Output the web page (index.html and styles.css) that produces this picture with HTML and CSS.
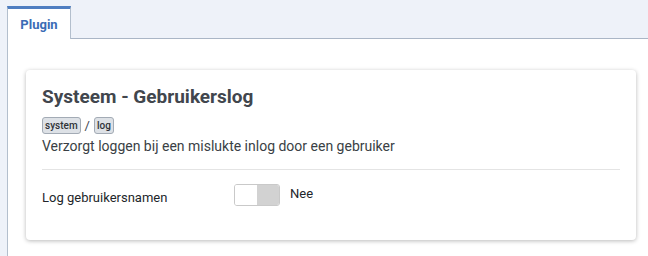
FILE: index.html
```html
<!DOCTYPE html>
<html lang="nl">
<head>
    <meta charset="UTF-8">
    <title>Plugin: Systeem - Gebruikerslog</title>
    <link rel="stylesheet" href="styles.css">
</head>
<body>
    <div class="tabset">
        <div class="tab-list">
            <button class="tab active">Plugin</button>
        </div>
        <div class="tab-panel">
            <div class="card">
                <h2 class="card-title">Systeem - Gebruikerslog</h2>
                <div class="tags">
                    <span class="badge">system</span>
                    <span class="sep">/</span>
                    <span class="badge">log</span>
                </div>
                <p class="desc">Verzorgt loggen bij een mislukte inlog door een gebruiker</p>
                <hr>
                <div class="field">
                    <label class="field-label">Log gebruikersnamen</label>
                    <div class="switch">
                        <span class="switch-on"></span>
                        <span class="switch-off"></span>
                    </div>
                    <span class="switch-text">Nee</span>
                </div>
            </div>
        </div>
    </div>
</body>
</html>
```

FILE: styles.css
```css
html, body {
    height: 256px;
    overflow: hidden;
}

body {
    margin: 0;
    font-family: Roboto, "Liberation Sans", sans-serif;
    background-color: #eef2f9;
    color: #22262a;
}

.tabset {
    margin-left: 7px;
}

.tab-list {
    display: flex;
    height: 39px;
    border-bottom: 1px solid #aab6c6;
    box-sizing: border-box;
}

.tab {
    margin-top: 6px;
    margin-bottom: -1px;
    width: 64px;
    padding: 0;
    border: 1px solid #b3bfcd;
    border-top: 3px solid #4f7ec1;
    border-bottom: none;
    background-color: #fff;
    color: #3b6cb5;
    font-family: inherit;
    font-size: 13px;
    font-weight: bold;
}

.tab-panel {
    background-color: #fff;
    border-left: 1px solid #b3bfcd;
    padding: 31px 12px 20px 18px;
}

.card {
    background-color: #fff;
    border-radius: 4px;
    box-shadow: 0 1px 4px rgba(0, 0, 0, 0.28);
    padding: 15px 16px 32px;
}

.card-title {
    margin: 0;
    font-size: 19px;
    line-height: 24px;
    font-weight: bold;
    color: #41464d;
}

.tags {
    display: flex;
    align-items: center;
    gap: 4px;
    margin-top: 8px;
}

.badge {
    display: inline-block;
    height: 17px;
    box-sizing: border-box;
    font-size: 10px;
    font-weight: 500;
    line-height: 15px;
    padding: 0 2px;
    color: #2f3338;
    background-color: #dde1e6;
    border: 1px solid #a3abb5;
    border-radius: 3px;
}

.sep {
    font-size: 13px;
    color: #41464d;
}

.desc {
    margin: 2px 0 0;
    font-size: 14px;
    line-height: 20px;
    color: #3a3f45;
}

hr {
    border: none;
    border-top: 1px solid #e4e4e4;
    margin: 13px 0 14px;
}

.field {
    display: flex;
    align-items: flex-start;
}

.field-label {
    width: 192px;
    font-size: 13px;
    line-height: 20px;
    padding-top: 4px;
}

.switch {
    display: flex;
    width: 46px;
    height: 22px;
    border: 1px solid #c9c9c9;
    border-radius: 3px;
    overflow: hidden;
    box-sizing: border-box;
}

.switch-on {
    flex: 1;
    background-color: #fff;
}

.switch-off {
    flex: 1;
    background-color: #d2d2d2;
}

.switch-text {
    margin-left: 10px;
    font-size: 13px;
    line-height: 22px;
    margin-top: -1px;
}
```
